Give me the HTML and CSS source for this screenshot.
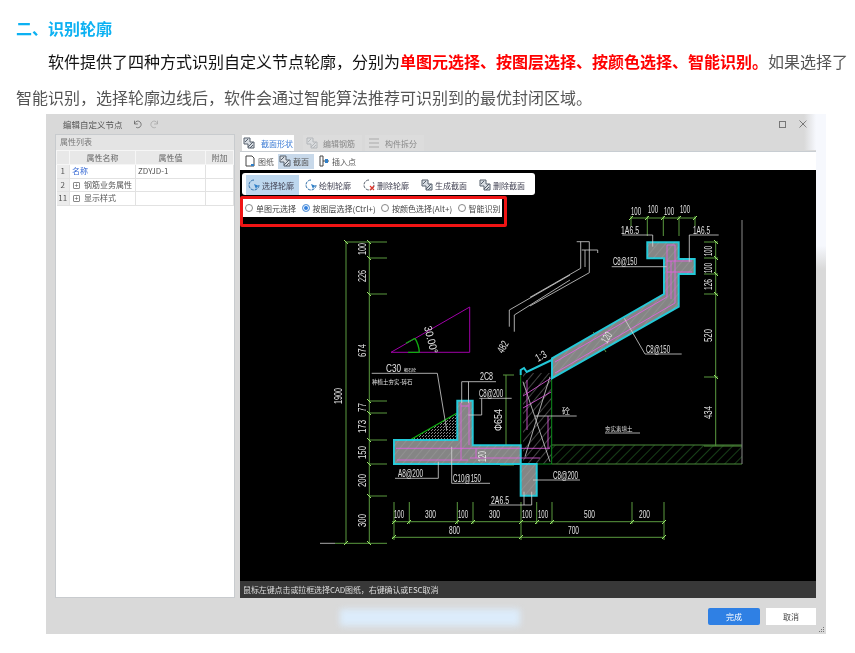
FILE: index.html
```html
<!DOCTYPE html>
<html lang="zh-CN">
<head>
<meta charset="utf-8">
<title>识别轮廓</title>
<link rel="stylesheet" href="styles.css">
</head>
<body>
<svg class="defs" width="0" height="0" aria-hidden="true">
  <defs>
    <symbol id="i-sec" viewBox="0 0 12 12">
      <path d="M1 1h6v4h4v6H5V7H1z" fill="#d8dde3" stroke="#56606c" stroke-width="1"/>
      <path d="M2 5l3-3M5 10l5-5M7 11l3-3" stroke="#56606c" stroke-width="1" fill="none"/>
    </symbol>
    <symbol id="i-sel" viewBox="0 0 12 12">
      <path d="M6 1a5 5 0 1 0 5 5" fill="none" stroke="#2f6ea8" stroke-width="1" stroke-dasharray="3 1"/>
      <path d="M6 5l5 2-2 1-1 2z" fill="#2f7fc8"/>
    </symbol>
    <symbol id="i-del" viewBox="0 0 12 12">
      <path d="M6 1a5 5 0 1 0 4 2" fill="none" stroke="#56606c" stroke-width="1" stroke-dasharray="3 1"/>
      <path d="M7 7l4 4M11 7l-4 4" stroke="#e0352b" stroke-width="1.2"/>
    </symbol>
    <pattern id="hatch" width="6" height="6" patternUnits="userSpaceOnUse" patternTransform="rotate(40)">
      <path d="M0 0V6" stroke="#c4c4c4" stroke-width=".7"/>
    </pattern>
    <pattern id="ground" width="7" height="7" patternUnits="userSpaceOnUse" patternTransform="rotate(45)">
      <path d="M0 0V7" stroke="#2f7d2f" stroke-width="1"/>
    </pattern>
    <pattern id="dots" width="3" height="3" patternUnits="userSpaceOnUse">
      <path d="M0 0h1v1H0zM2 1h1v1H2z" fill="#8a8a8a"/>
    </pattern>
  </defs>
</svg>

<main class="article">
  <h2 class="heading">二、识别轮廓</h2>
  <p class="para"><span class="black">软件提供了四种方式识别自定义节点轮廓，分别为</span><strong class="red">单图元选择、按图层选择、按颜色选择、智能识别。</strong><span>如果选择了</span><span>智能识别，选择轮廓边线后，软件会通过智能算法推荐可识别到的最优封闭区域。</span></p>
</main>

<section class="window">
  <header class="titlebar">
    <span class="title">编辑自定义节点</span>
    <svg class="undo" viewBox="0 0 12 12"><path d="M3 2v4h4M3 6a4 4 0 1 1 2 4" fill="none" stroke="#666" stroke-width="1"/></svg>
    <svg class="undo" viewBox="0 0 12 12"><path d="M9 2v4H5M9 6a4 4 0 1 0-2 4" fill="none" stroke="#aaa" stroke-width="1"/></svg>
    <span class="spacer"></span>
    <span class="maxbtn"></span>
    <svg class="closebtn" viewBox="0 0 8 8"><path d="M.5.5l7 7M7.500.5l-7 7" stroke="#777" stroke-width="1"/></svg>
  </header>

  <div class="body">
    <aside class="props">
      <div class="props-head">属性列表</div>
      <table class="ptable">
        <thead>
          <tr><th class="c-n"></th><th class="c-k">属性名称</th><th class="c-v">属性值</th><th class="c-x">附加</th></tr>
        </thead>
        <tbody>
          <tr><td class="num">1</td><td class="link">名称</td><td>ZDYJD-1</td><td></td></tr>
          <tr><td class="num">2</td><td><span class="plus">+</span>钢筋业务属性</td><td></td><td></td></tr>
          <tr><td class="num">11</td><td><span class="plus">+</span>显示样式</td><td></td><td></td></tr>
        </tbody>
      </table>
    </aside>

    <div class="editor">
      <nav class="tabs">
        <span class="tab on"><svg class="ico"><use href="#i-sec"/></svg>截面形状</span>
        <span class="tab off"><svg class="ico faint"><use href="#i-sec"/></svg>编辑钢筋</span>
        <span class="tab off"><svg class="ico" viewBox="0 0 12 12"><path d="M1 2h10M1 6h10M1 10h10" stroke="#aaa"/></svg>构件拆分</span>
      </nav>
      <div class="subbar">
        <span class="sub"><svg class="ico" viewBox="0 0 12 12"><path d="M2 1h6l2 2v8H2z" fill="#fff" stroke="#444"/><path d="M7 9h3v2H7z" fill="#2f7fc8"/></svg>图纸</span>
        <span class="sub active"><svg class="ico"><use href="#i-sec"/></svg>截面</span>
        <span class="sub"><svg class="ico" viewBox="0 0 12 12"><path d="M2 1h3v10H2zM5 6h6" fill="none" stroke="#444"/><path d="M7 4h3v4H7z" fill="#2f7fc8"/></svg>插入点</span>
      </div>

      <div class="canvas">
        <svg class="cad" viewBox="240 170 576 411" role="img" aria-label="节点轮廓CAD图">
          <!-- dimension lines -->
          <path class="dim" d="M346 242V543M369.300 242V543M346 242H387M369 258H387M369 294H387M369 401H387M369 413H387M369 440H387M369 464H387M369 496H387M335 543.300H387"/>
          <path class="dim" d="M715.700 242V446M704 242H718M704 258H718M704 274H718M704 294H718M704 377H718M704 446H742"/>
          <path class="dim" d="M631 218H696M631 216V226M647.300 216V236M663.300 216V236M679 216V236M695 216V226"/>
          <path class="dim" d="M392 521.700H664M394 502V524M409.300 502V524M457.300 502V524M473 502V524M521 502V524M536.700 502V524M552 502V524M632 502V524M664 502V524M394 524V540M392 537.300H664M521 524V540M664 524V540"/>
          <path class="dim" d="M506 375V465M503 375H514M500 465H514"/>
          <path class="dim" d="M593.300 332L606 352"/>
          <path class="tick" d="M344 240l4 4M344 545l4-4M367 240l4 4M367 256l4 4M367 292l4 4M367 399l4 4M367 411l4 4M367 438l4 4M367 462l4 4M367 494l4 4M367 541l4 4M714 240l4 4M714 256l4 4M714 272l4 4M714 292l4 4M714 375l4 4M629 220l4-4M645 220l4-4M661 220l4-4M677 220l4-4M693 220l4-4M392 524l4-4M407 524l4-4M455 524l4-4M471 524l4-4M519 524l4-4M535 524l4-4M550 524l4-4M630 524l4-4M662 524l4-4M392 539l4-4M519 539l4-4M662 539l4-4"/>

          <!-- triangle -->
          <path class="purple" d="M391 352.300H469.700V307z"/>
          <path class="bright" d="M408 352.300H419.300M406 343.300L415 338.300M415 338.300Q419 345 419.300 352.300"/>

          <!-- gutter and hook -->
          <path class="wire" d="M509.300 326.700V310L570 275M514.300 331.700V315L570 280"/>
          <path class="wire" d="M576.700 241.700H589.300V272.700L530 306M580.700 241.700V268.300L530 297.300M581.700 250H597.700V253M585 250V267"/>

          <!-- ground -->
          <path class="groundfill" d="M552 445H742V464H552z"/>
          <path class="gridline" d="M552 445H742M552 464H742"/>
          <path class="wall-line" d="M742 220V464"/>

          <!-- soil -->
          <path class="soil" d="M410 440L456.700 413.300V440z"/>
          <path class="bright" d="M410 440L456.700 413.300"/>

          <!-- wall -->
          <path class="hatchfill" d="M523 373H551.700V464H523z"/>
          <path class="dark-green" d="M520.700 373V464M551.700 360V464M520 464H552"/>
          <path class="wire" d="M525 456.700L550 376.700M523 381.700L550 461.700"/>
          <path class="magenta" d="M523 396L551 378M523 408L551 392M527 380V430M548 416V448"/>
          <path class="outline-thin" d="M520.700 375V370L524 368L526.700 372L551.700 360"/>

          <!-- upper section -->
          <path class="section" d="M647.300 242.300H678.700V259H694.700V274H678.700V306.700L552 378.300V358.300L664 294V258.300H647.300z"/>
          <path class="hatchover" d="M647.300 242.300H678.700V259H694.700V274H678.700V306.700L552 378.300V358.300L664 294V258.300H647.300z"/>
          <path class="magenta" d="M667 245V297L555 362M675 245V303L555 373M667 245H675M667 261H692M667 272H692M671 261V299"/>

          <!-- lower section -->
          <path class="section" d="M394 440H457.300V400.700H472.700V445.300H520.700V464H536.700V495.700H520.700V464H394z"/>
          <path class="hatchover" d="M394 440H457.300V400.700H472.700V445.300H520.700V464H394zM520.700 464H536.700V495.700H520.700z"/>
          <path class="magenta" d="M396 448.300H550M397 460H468M461 403V460M469 403V445M461 406H469M470 458H540M476 448V458"/>

          <!-- leaders -->
          <path class="wire" d="M371.700 373.300H437.300L446.700 430M461.700 403V381.700H496M468.500 403V381.700M479.300 398.300H511.700M481.700 398.300V415H468.300M395 478.300H438.300V461.700M451.700 446.700V483.300H490M533 480H580M489.300 505H531.700V491.700M524 505V491.700M535 416H576.700M605 433H640"/>
          <path class="wire" d="M622.300 235H652.700V246.700M689.300 235H718.700M689.300 235V261.700M611.700 266.700H666.700M624.300 318.300L645 354H681.700M320 543.300H335"/>

          <!-- labels -->
          <g class="cadtext">
            <text x="631" y="215" textLength="10" lengthAdjust="spacingAndGlyphs">100</text>
            <text x="648" y="213" textLength="10" lengthAdjust="spacingAndGlyphs">100</text>
            <text x="664" y="215" textLength="10" lengthAdjust="spacingAndGlyphs">100</text>
            <text x="680" y="213" textLength="10" lengthAdjust="spacingAndGlyphs">100</text>
            <text x="621" y="234" textLength="18" lengthAdjust="spacingAndGlyphs">1A6.5</text>
            <text x="693" y="234" textLength="17" lengthAdjust="spacingAndGlyphs">1A6.5</text>
            <text x="613" y="265" textLength="24" lengthAdjust="spacingAndGlyphs">C8@150</text>
            <text x="646" y="353" textLength="24" lengthAdjust="spacingAndGlyphs">C8@150</text>
            <text x="386" y="372" textLength="15" lengthAdjust="spacingAndGlyphs">C30</text>
            <text x="480" y="380" textLength="13" lengthAdjust="spacingAndGlyphs">2C8</text>
            <text x="479" y="397" textLength="24" lengthAdjust="spacingAndGlyphs">C8@200</text>
            <text x="398" y="477" textLength="25" lengthAdjust="spacingAndGlyphs">A8@200</text>
            <text x="453" y="482" textLength="28" lengthAdjust="spacingAndGlyphs">C10@150</text>
            <text x="553" y="479" textLength="25" lengthAdjust="spacingAndGlyphs">C8@200</text>
            <text x="491" y="504" textLength="18" lengthAdjust="spacingAndGlyphs">2A6.5</text>
            <text x="394" y="518" textLength="10" lengthAdjust="spacingAndGlyphs">100</text>
            <text x="425" y="518" textLength="11" lengthAdjust="spacingAndGlyphs">300</text>
            <text x="458" y="518" textLength="10" lengthAdjust="spacingAndGlyphs">100</text>
            <text x="489" y="518" textLength="11" lengthAdjust="spacingAndGlyphs">300</text>
            <text x="522" y="518" textLength="10" lengthAdjust="spacingAndGlyphs">100</text>
            <text x="538" y="518" textLength="10" lengthAdjust="spacingAndGlyphs">100</text>
            <text x="584" y="518" textLength="11" lengthAdjust="spacingAndGlyphs">500</text>
            <text x="639" y="518" textLength="11" lengthAdjust="spacingAndGlyphs">200</text>
            <text x="449" y="534" textLength="11" lengthAdjust="spacingAndGlyphs">800</text>
            <text x="568" y="534" textLength="11" lengthAdjust="spacingAndGlyphs">700</text>
            <text x="562" y="414" class="cjk">砼</text>
            <text x="372" y="384" class="cjk tiny">种植土夯实-碎石</text>
            <text x="404" y="372" class="cjk micro">细石砼</text>
            <text x="605" y="431" class="cjk tiny">夯实素填土</text>
            <text transform="translate(366 255) rotate(-90)" textLength="12" lengthAdjust="spacingAndGlyphs">100</text>
            <text transform="translate(366 282) rotate(-90)" textLength="12" lengthAdjust="spacingAndGlyphs">226</text>
            <text transform="translate(366 357) rotate(-90)" textLength="13" lengthAdjust="spacingAndGlyphs">674</text>
            <text transform="translate(342 404) rotate(-90)" textLength="16" lengthAdjust="spacingAndGlyphs">1900</text>
            <text transform="translate(366 412) rotate(-90)" textLength="9" lengthAdjust="spacingAndGlyphs">77</text>
            <text transform="translate(366 433) rotate(-90)" textLength="13" lengthAdjust="spacingAndGlyphs">173</text>
            <text transform="translate(366 459) rotate(-90)" textLength="13" lengthAdjust="spacingAndGlyphs">150</text>
            <text transform="translate(366 487) rotate(-90)" textLength="13" lengthAdjust="spacingAndGlyphs">200</text>
            <text transform="translate(366 527) rotate(-90)" textLength="13" lengthAdjust="spacingAndGlyphs">300</text>
            <text transform="translate(712 256) rotate(-90)" textLength="10" lengthAdjust="spacingAndGlyphs">100</text>
            <text transform="translate(712 273) rotate(-90)" textLength="10" lengthAdjust="spacingAndGlyphs">100</text>
            <text transform="translate(712 290) rotate(-90)" textLength="11" lengthAdjust="spacingAndGlyphs">126</text>
            <text transform="translate(712 342) rotate(-90)" textLength="13" lengthAdjust="spacingAndGlyphs">520</text>
            <text transform="translate(712 419) rotate(-90)" textLength="13" lengthAdjust="spacingAndGlyphs">434</text>
            <text transform="translate(502 431) rotate(-90)" textLength="22" lengthAdjust="spacingAndGlyphs">Φ654</text>
            <text transform="translate(607 344) rotate(-60)" textLength="11" lengthAdjust="spacingAndGlyphs">120</text>
            <text transform="translate(486 462) rotate(-90)" textLength="11" lengthAdjust="spacingAndGlyphs">120</text>
            <text transform="translate(503 354) rotate(-60)" textLength="12" lengthAdjust="spacingAndGlyphs">482</text>
            <text transform="translate(538 362) rotate(-30)" textLength="11" lengthAdjust="spacingAndGlyphs">1:3</text>
            <text transform="translate(424 327) rotate(76)" textLength="28" lengthAdjust="spacingAndGlyphs">30.00°</text>
          </g>
        </svg>

        <div class="floatbar">
          <span class="tool active"><svg class="ico"><use href="#i-sel"/></svg>选择轮廓</span>
          <span class="tool"><svg class="ico"><use href="#i-sel"/></svg>绘制轮廓</span>
          <span class="tool"><svg class="ico"><use href="#i-del"/></svg>删除轮廓</span>
          <span class="tool"><svg class="ico"><use href="#i-sec"/></svg>生成截面</span>
          <span class="tool"><svg class="ico"><use href="#i-sec"/></svg>删除截面</span>
        </div>

        <div class="redbox">
          <div class="radios">
            <span class="radio"><i class="dot"></i>单图元选择</span>
            <span class="radio"><i class="dot sel"></i>按图层选择(Ctrl+)</span>
            <span class="radio"><i class="dot"></i>按颜色选择(Alt+)</span>
            <span class="radio"><i class="dot"></i>智能识别</span>
          </div>
        </div>
      </div>

      <div class="status">鼠标左键点击或拉框选择CAD图纸，右键确认或ESC取消</div>
    </div>
  </div>

  <footer class="actions">
    <span class="smudge"></span>
    <button class="btn primary">完成</button>
    <button class="btn">取消</button>
    <svg class="grip" viewBox="0 0 6 6"><path d="M4 0h1v1H4zM2 2h1v1H2zM4 2h1v1H4zM0 4h1v1H0zM2 4h1v1H2zM4 4h1v1H4z" fill="#777"/></svg>
  </footer>
  <span class="fade"></span>
  <span class="strip"></span>
</section>
</body>
</html>
```
FILE: styles.css
```css
* { box-sizing: border-box; }
html, body { margin: 0; padding: 0; }
body {
  width: 855px;
  height: 653px;
  overflow: hidden;
  background: #fff;
  font-family: "Noto Sans CJK SC", "Noto Sans", sans-serif;
}
.defs { display: block; height: 0; }

.article { padding: 16px 0 0 16px; filter: blur(.25px); }
.heading {
  margin: 0;
  height: 24px;
  font-size: 16px;
  line-height: 24px;
  font-weight: 700;
  color: #0cb1f2;
}
.para {
  margin: 3px 0 0;
  font-size: 16px;
  line-height: 36px;
  text-indent: 32px;
  color: #555;
}
.black { color: #111; }
.red { color: #f00; font-weight: 700; }

.window {
  position: relative;
  margin: -1px 0 0 46px;
  width: 780px;
  height: 520px;
  display: flex;
  flex-direction: column;
  background: #d9d9d9;
  font-size: 8px;
  color: #444;
  filter: blur(.35px);
}
.titlebar {
  height: 20px;
  flex: none;
  display: flex;
  align-items: center;
  padding: 0 19px 0 17px;
  gap: 8px;
  font-size: 8.500px;
  color: #555;
}
.title { margin-right: 1px; }
.undo { width: 10px; height: 10px; }
.spacer { flex: 1; }
.maxbtn { width: 7px; height: 7px; border: 1px solid #777; margin-right: 5px; }
.closebtn { width: 8px; height: 8px; }

.body {
  flex: none;
  height: 464px;
  display: flex;
  gap: 5px;
  padding: 0 10px 0 9px;
}
.props {
  width: 180px;
  flex: none;
  background: #fff;
  border: 1px solid #c8cbce;
}
.props-head {
  height: 15px;
  line-height: 14px;
  padding-left: 4px;
  background: #e4e4e4;
  color: #777;
}
.ptable {
  width: 100%;
  table-layout: fixed;
  border-collapse: collapse;
  font-size: 8px;
  color: #555;
}
.ptable th {
  height: 14px;
  padding: 0;
  font-weight: 400;
  background: #e8e8e8;
  border: 1px solid #f6f6f6;
  color: #666;
}
.ptable td {
  height: 13.500px;
  padding: 0 2px;
  line-height: 12px;
  white-space: nowrap;
  overflow: hidden;
  border-right: 1px solid #e2e2e2;
  border-bottom: 1px solid #e2e2e2;
}
.c-n { width: 13px; }
.c-k { width: 66px; }
.c-v { width: 70px; }
.ptable td.num { background: #ececec; text-align: center; padding: 0; }
.ptable td.link { color: #3568d4; }
.plus {
  display: inline-block;
  width: 7px;
  height: 7px;
  margin: 0 4px 0 1px;
  border: 1px solid #888;
  border-radius: 1px;
  font-size: 7px;
  line-height: 5px;
  text-align: center;
  vertical-align: 0;
}

.editor {
  flex: 1;
  min-width: 0;
  display: flex;
  flex-direction: column;
}
.tabs {
  height: 17px;
  flex: none;
  display: flex;
  gap: 3px;
  padding: 1px 0 0 2px;
}
.tab {
  display: flex;
  flex: none;
  align-items: center;
  gap: 5px;
  padding: 0 1px;
  color: #888;
  background: #dcdcdc;
  white-space: nowrap;
}
.tab.on { width: 52px; gap: 6px; background: #fff; color: #3f7ed6; margin-right: 6px; }
.tab.off { width: 59px; padding-left: 3px; }
.ico { width: 12px; height: 12px; flex: none; }
.faint { opacity: .3; }

.subbar {
  height: 19px;
  flex: none;
  display: flex;
  align-items: center;
  gap: 3px;
  padding: 0 0 0 3px;
  background: #fff;
  color: #555;
  border-top: 1px solid #c8cdd2;
}
.sub { display: flex; flex: none; align-items: center; gap: 2px; height: 15px; padding: 0 1px; white-space: nowrap; }
.sub.active { background: #c8d9ea; width: 36px; }

.canvas {
  position: relative;
  flex: none;
  height: 411px;
  background: #000;
  overflow: hidden;
}
.cad { display: block; width: 576px; height: 411px; }
.dim, .tick, .purple, .bright, .wire, .gridline, .dark-green, .magenta, .outline-thin, .wall-line { fill: none; }
.dim { stroke: #5b9a3f; stroke-width: 1; }
.tick { stroke: #9be86a; stroke-width: 1; }
.purple { stroke: #a000a8; stroke-width: 1; }
.bright { stroke: #10b010; stroke-width: 1.300; }
.wire { stroke: #d4d4d4; stroke-width: .8; }
.gridline { stroke: #4a8a3a; stroke-width: 1; }
.wall-line { stroke: #8a8a8a; stroke-width: 1; }
.dark-green { stroke: #0c8c1c; stroke-width: 1; }
.magenta { stroke: #e860e8; stroke-width: .8; }
.outline-thin { stroke: #22c8d8; stroke-width: 2; }
.groundfill { fill: url(#ground); }
.soil { fill: url(#dots); }
.hatchfill { fill: url(#hatch); }
.section { fill: #858585; stroke: #23c9d8; stroke-width: 2; }
.hatchover { fill: url(#hatch); opacity: .5; }
.cadtext { fill: #e4e4e4; font-family: "Liberation Sans", sans-serif; font-size: 11px; }
.cadtext .cjk { font-family: "Noto Sans CJK SC", sans-serif; font-size: 8px; }
.cadtext .tiny { font-size: 5.500px; }
.cadtext .micro { font-size: 4px; }

.floatbar {
  position: absolute;
  left: 2px;
  top: 3px;
  width: 293px;
  height: 22px;
  display: flex;
  align-items: center;
  background: #fff;
  border-radius: 3px;
  padding-left: 4px;
  color: #445;
}
.tool { display: flex; align-items: center; gap: 2px; height: 20px; margin-top: 2px; padding: 0 2px; width: 58px; white-space: nowrap; }
.tool.active { width: 53px; background: #bdd7ee; margin-right: 4px; }
.redbox {
  position: absolute;
  left: 0;
  top: 26px;
  width: 267px;
  height: 31px;
  border: 3px solid #f01414;
  border-radius: 2px;
}
.radios {
  height: 18px;
  width: 259px;
  display: flex;
  align-items: center;
  padding-left: 2px;
  gap: 5.500px;
  background: #fff;
  color: #444;
  white-space: nowrap;
}
.radio { display: flex; align-items: center; gap: 3px; }
.dot {
  width: 8px;
  height: 8px;
  flex: none;
  border: 1px solid #888;
  border-radius: 50%;
  background: #fff;
}
.dot.sel { border-color: #6a9fd8; box-shadow: inset 0 0 0 1px #fff; background: #2f7fe0; }

.status {
  height: 17px;
  flex: none;
  line-height: 17px;
  padding-left: 3px;
  background: #383838;
  color: #ddd;
  letter-spacing: -.1px;
}
.actions {
  position: relative;
  flex: 1;
  display: flex;
  justify-content: flex-end;
  gap: 6px;
  padding: 10px 10px 0 0;
}
.btn {
  width: 50px;
  height: 17px;
  padding: 0;
  border: 0;
  font: inherit;
  color: #444;
  background: #fff;
}
.btn.primary { width: 52px; background: #2f80e4; color: #fff; border-radius: 2px; }
.smudge {
  position: absolute;
  left: 294px;
  top: 11px;
  width: 180px;
  height: 17px;
  background: #dcecfb;
  filter: blur(3px);
}
.grip { position: absolute; right: 1px; bottom: 1px; width: 6px; height: 6px; }
.fade {
  position: absolute;
  top: 0;
  right: 10px;
  width: 12px;
  height: 36px;
  background: linear-gradient(90deg, rgba(246,248,253,0), #f6f8fd);
}
.strip {
  position: absolute;
  top: 0;
  right: 0;
  width: 10px;
  height: 155px;
  background: linear-gradient(180deg, #f6f8fd 85%, rgba(246,248,253,0));
}
```
